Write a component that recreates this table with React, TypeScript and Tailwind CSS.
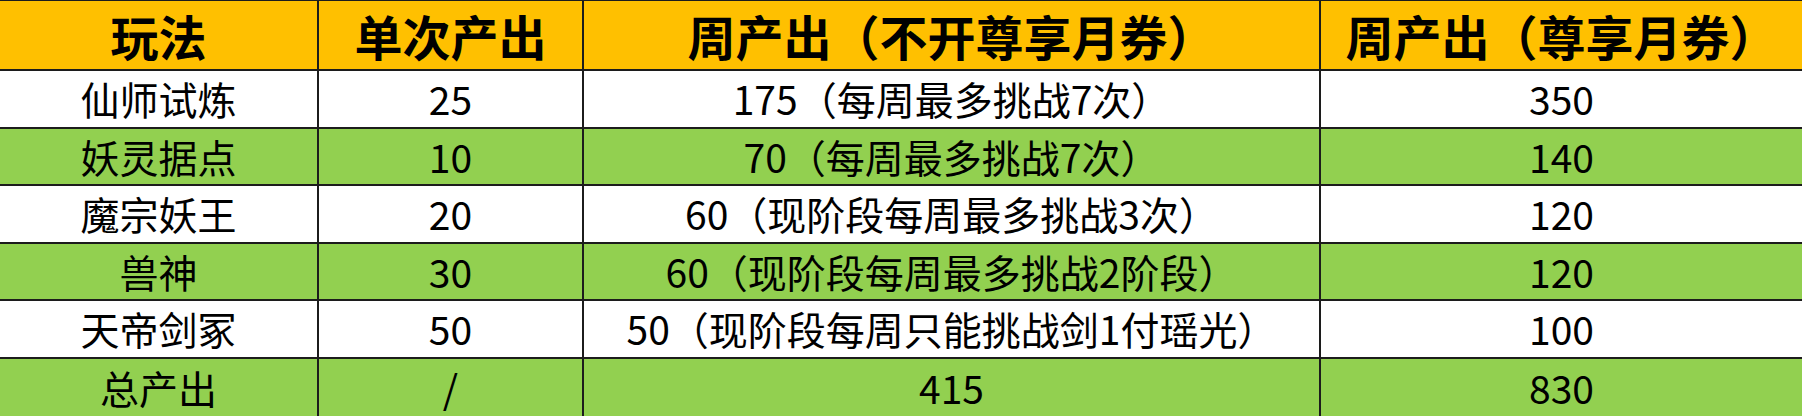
const header = ['玩法', '单次产出', '周产出（不开尊享月券）', '周产出（尊享月券）'];

const rows = [
  { name: '仙师试炼', single: '25', week: '175（每周最多挑战7次）', vip: '350' },
  { name: '妖灵据点', single: '10', week: '70（每周最多挑战7次）', vip: '140' },
  { name: '魔宗妖王', single: '20', week: '60（现阶段每周最多挑战3次）', vip: '120' },
  { name: '兽神', single: '30', week: '60（现阶段每周最多挑战2阶段）', vip: '120' },
  { name: '天帝剑冢', single: '50', week: '50（现阶段每周只能挑战剑1付瑶光）', vip: '100' },
  { name: '总产出', single: '/', week: '415', vip: '830' },
];

const cols = 'grid grid-cols-[319px_265px_737px_1fr]';
const cell = 'flex items-center justify-center whitespace-nowrap border-r-2 border-[#1c1c1c] last:border-r-0';

export default function App() {
  return (
    <div
      className="w-[1802px] h-[416px] overflow-hidden bg-white text-black"
      style={{ fontFamily: '"Noto Sans CJK SC", "Noto Sans", sans-serif' }}
    >
      <div className={`${cols} h-[71px] border-t border-b-2 border-[#1c1c1c] bg-[#FFC000] text-[48px] font-bold leading-none`}>
        {header.map((h) => (
          <div key={h} className={cell}>
            {h}
          </div>
        ))}
      </div>
      {rows.map((r, i) => (
        <div
          key={r.name}
          className={`${cols} h-[57.5px] text-[39px] leading-none ${
            i < rows.length - 1 ? 'border-b-2 border-[#1c1c1c]' : ''
          } ${i % 2 === 0 ? 'bg-white' : 'bg-[#92D050]'}`}
        >
          <div className={cell}>{r.name}</div>
          <div className={cell}>{r.single}</div>
          <div className={cell}>{r.week}</div>
          <div className={cell}>{r.vip}</div>
        </div>
      ))}
    </div>
  );
}
